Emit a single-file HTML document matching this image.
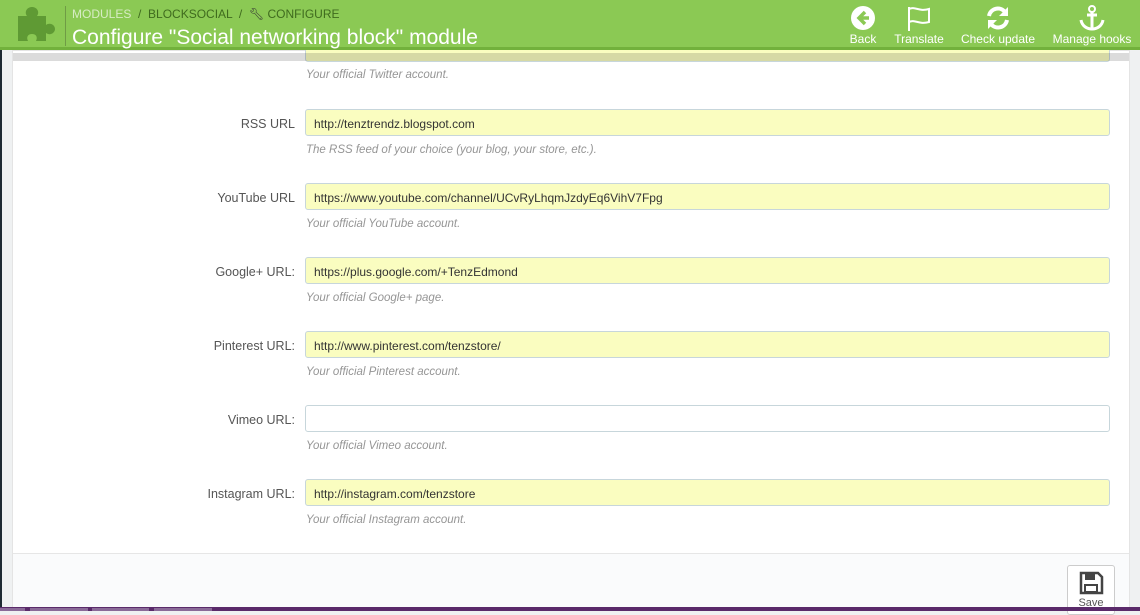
<!DOCTYPE html>
<html><head><meta charset="utf-8"><style>
*{box-sizing:border-box;margin:0;padding:0}
body{width:1140px;height:611px;overflow:hidden;background:#eff1f2;font-family:"Liberation Sans",sans-serif;position:relative}
.left{position:absolute;left:0;top:0;width:2px;height:611px;background:#1e2a33}
.panel{position:absolute;left:12px;top:50px;width:1118px;height:560px;background:#fff;border:1px solid #e4e4e4}
.footer{position:absolute;left:13px;top:553px;width:1116px;height:56px;background:#fafbfc;border-top:1px solid #e6e6e6}
.hdr{position:absolute;left:0;top:0;width:1140px;height:50px;background:#8bc954;border-bottom:3px solid #72b13c}
.shadow{position:absolute;left:13px;top:53px;width:1116px;height:8px;background:rgba(0,0,0,0.14)}
.row{position:absolute;left:0;width:1140px}
.lbl{position:absolute;right:845px;top:8px;font-size:12.5px;color:#555;text-align:right;white-space:nowrap}
.inp{position:absolute;left:305px;top:0;width:805px;height:27px;border:1px solid #c7d6db;border-radius:3px;background:#fafdc0;font-size:12px;color:#333;padding:7px 8px;white-space:nowrap}
.inp.e{background:#fff}
.help{position:absolute;left:306px;top:35px;font-size:11.5px;font-style:italic;color:#959595;white-space:nowrap}
.bc{position:absolute;left:72px;top:7px;font-size:12px;color:#3f6b1e}
.bc .m{color:#d7ecc4}
.title{position:absolute;left:72px;top:26px;font-size:21px;color:#fff}
.sep{position:absolute;left:65px;top:6px;width:1px;height:40px;background:#6f9c45}
.tb{position:absolute;top:0;text-align:center;color:#fff;font-size:12px}
.tb svg{display:block;margin:5px auto 1px}
.purple{position:absolute;left:0;top:607px;width:1140px;height:4px;background:#5a2a6a}
.tab{position:absolute;top:608px;height:3px;background:#8a6a98}
.save{position:absolute;left:1067px;top:565px;width:48px;height:50px;border:1px solid #ccc;border-radius:3px;background:#fff;text-align:center;font-size:11px;color:#555}
</style></head><body>
<div class="left"></div>
<div class="panel"></div>
<div class="row" style="top:35px"><div class="inp"></div><div class="help" style="top:34px">Your official Twitter account.</div></div>
<div class="shadow"></div>
<div class="row" style="top:109px"><div class="lbl">RSS URL</div><div class="inp">http://tenztrendz.blogspot.com</div><div class="help">The RSS feed of your choice (your blog, your store, etc.).</div></div>
<div class="row" style="top:183px"><div class="lbl">YouTube URL</div><div class="inp">https://www.youtube.com/channel/UCvRyLhqmJzdyEq6VihV7Fpg</div><div class="help">Your official YouTube account.</div></div>
<div class="row" style="top:257px"><div class="lbl">Google+ URL:</div><div class="inp">https://plus.google.com/+TenzEdmond</div><div class="help">Your official Google+ page.</div></div>
<div class="row" style="top:331px"><div class="lbl">Pinterest URL:</div><div class="inp">http://www.pinterest.com/tenzstore/</div><div class="help">Your official Pinterest account.</div></div>
<div class="row" style="top:405px"><div class="lbl">Vimeo URL:</div><div class="inp e"></div><div class="help">Your official Vimeo account.</div></div>
<div class="row" style="top:479px"><div class="lbl">Instagram URL:</div><div class="inp">http://instagram.com/tenzstore</div><div class="help">Your official Instagram account.</div></div>
<div class="footer"></div>
<div class="save"><svg width="26" height="26" viewBox="0 0 26 26" style="margin:4px auto 1px;display:block"><path d="M3 3h17l4 4v16H3z" fill="none" stroke="#444" stroke-width="2.5"/><rect x="7" y="3" width="10" height="7" fill="#444"/><rect x="7" y="15" width="12" height="7" fill="none" stroke="#444" stroke-width="2"/></svg>Save</div>
<div class="purple"></div>
<div class="tab" style="left:0;width:25px"></div><div class="tab" style="left:30px;width:58px"></div><div class="tab" style="left:92px;width:57px"></div><div class="tab" style="left:154px;width:58px"></div>
<div class="hdr">
<svg style="position:absolute;left:16px;top:6px" width="40" height="36" viewBox="0 0 40 36"><path d="M2 10h9c-3-4 0-9 5-9s8 5 5 9h9v9c4-3 9 0 9 4s-5 7-9 4v8H20c2-4 0-7-4-7s-6 3-4 7H2z" fill="#5f9a34"/></svg>
<div class="sep"></div>
<div class="bc"><span class="m">MODULES</span> &nbsp;/&nbsp; BLOCKSOCIAL &nbsp;/&nbsp; <span style="color:#333">&#x1F527;&#xFE0E;</span> CONFIGURE</div>
<div class="title">Configure "Social networking block" module</div>
<div class="tb" style="left:846px;width:34px"><svg width="26" height="26" viewBox="0 0 26 26"><circle cx="13" cy="13" r="12" fill="#fff"/><path d="M15 7l-6 6 6 6M9 13h10" stroke="#8bc954" stroke-width="3.5" fill="none"/></svg>Back</div>
<div class="tb" style="left:890px;width:58px"><svg width="28" height="26" viewBox="0 0 28 26"><path d="M4 2v24M4 4c6-3 10 3 20 0v13c-10 3-14-3-20 0" stroke="#fff" stroke-width="2" fill="none"/></svg>Translate</div>
<div class="tb" style="left:958px;width:80px"><svg width="26" height="26" viewBox="0 0 26 26"><path d="M4 11a9 9 0 0 1 16-4M22 15a9 9 0 0 1-16 4" stroke="#fff" stroke-width="4" fill="none"/><path d="M23 2v9h-9zM3 24v-9h9z" fill="#fff"/></svg>Check update</div>
<div class="tb" style="left:1048px;width:88px"><svg width="30" height="26" viewBox="0 0 30 26"><circle cx="15" cy="4" r="3" stroke="#fff" stroke-width="2" fill="none"/><path d="M15 7v17M10 10h10M4 15c1 6 6 9 11 9s10-3 11-9" stroke="#fff" stroke-width="3" fill="none"/></svg>Manage hooks</div>
</div>
</body></html>
